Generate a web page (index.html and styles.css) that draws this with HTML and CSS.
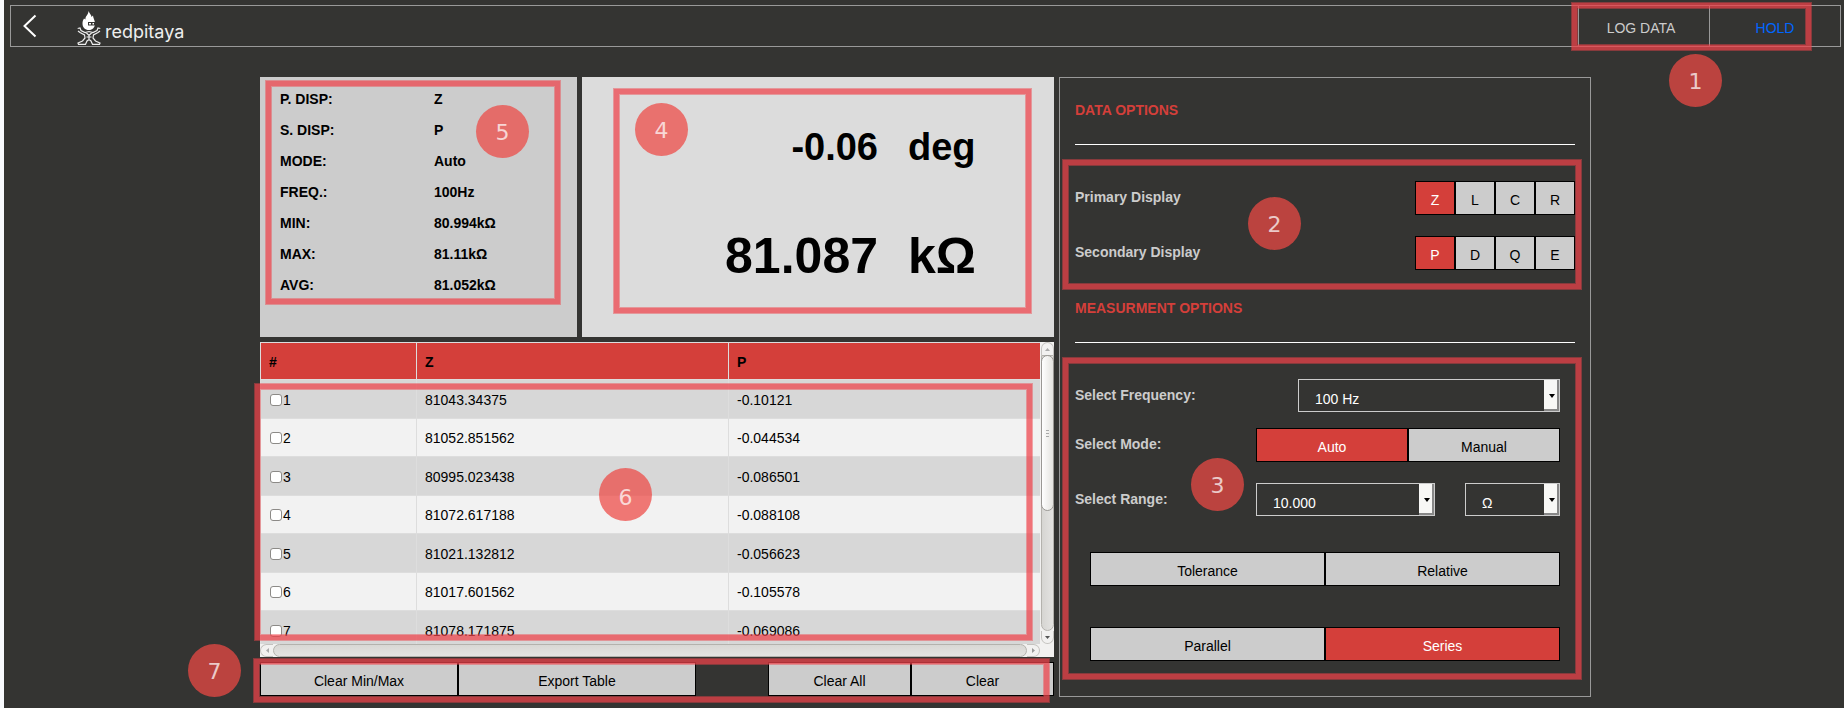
FILE: index.html
```html
<!DOCTYPE html>
<html lang="en">
<head>
<meta charset="utf-8">
<title>LCR meter</title>
<link rel="stylesheet" href="styles.css">
</head>
<body>
<header class="navbar">
  <a class="back" href="#" aria-label="Back">
    <svg width="14" height="24" viewBox="0 0 14 24"><path d="M12.500 1.500L1.500 12L12.500 22.500" fill="none" stroke="#fff" stroke-width="2"/></svg>
  </a>
  <a class="brand" href="#">
    <svg width="24" height="34" viewBox="0 0 24 34" aria-hidden="true">
      <path d="M11.500 0C12.500 2.500 14.500 4 14.500 6L16 4.500C16 7 18 9 18 12.500C18 16.500 15.500 19 12 19C8 19 5.500 16.500 5.500 12.500C5.500 10.500 6 9 7 7.500L8.500 8.500C8 5 11.500 4 11.500 0Z" fill="#fff"/>
      <path d="M11 11h7.500v3.500h-7.500z" fill="#343432"/>
      <path d="M12 12h2v1.500h-2zM15.500 12h1.500v1.500h-1.500z" fill="#fff"/>
      <path d="M0.700 17.500L3 17L4 19.500L8 21.500L12 20.500L16 21.500L20 19.500L21 17L23.300 17.500M1 20L3 21.500L7.500 24L8 27L5.500 30L1 32L1.500 33.300H8.500L10 30L12 28.500L14 30L15.500 33.300H22.500L23 32L18.500 30L16 27L16.500 24L21 21.500L23 20M9 21.500L12 24.500L15 21.500M12 24.500V28.500M9.500 26h5" fill="none" stroke="#eee" stroke-width="1.200"/>
    </svg>
    <span class="brand-name">redpitaya</span>
  </a>
  <nav class="actions">
    <button class="action action-log" type="button">LOG DATA</button>
    <button class="action action-hold" type="button">HOLD</button>
    <span class="mark mark-actions"></span>
    <span class="badge badge-actions">1</span>
  </nav>
</header>

<main class="layout">
  <div class="measure">
    <div class="readouts">
      <section class="info">
        <dl class="info-list">
          <dt>P. DISP:</dt><dd>Z</dd>
          <dt>S. DISP:</dt><dd>P</dd>
          <dt>MODE:</dt><dd>Auto</dd>
          <dt>FREQ.:</dt><dd>100Hz</dd>
          <dt>MIN:</dt><dd>80.994kΩ</dd>
          <dt>MAX:</dt><dd>81.11kΩ</dd>
          <dt>AVG:</dt><dd>81.052kΩ</dd>
        </dl>
        <span class="mark mark-info"></span>
        <span class="badge badge-info">5</span>
      </section>
      <section class="display">
        <div class="reading reading-secondary"><span class="value">-0.06</span><span class="unit">deg</span></div>
        <div class="reading reading-primary"><span class="value">81.087</span><span class="unit">kΩ</span></div>
        <span class="mark mark-display"></span>
        <span class="badge badge-display">4</span>
      </section>
    </div>

    <section class="log">
      <div class="log-view">
        <table class="log-table">
          <thead><tr><th class="col-id">#</th><th>Z</th><th>P</th></tr></thead>
          <tbody>
            <tr><td><label><input type="checkbox">1</label></td><td>81043.34375</td><td>-0.10121</td></tr>
            <tr><td><label><input type="checkbox">2</label></td><td>81052.851562</td><td>-0.044534</td></tr>
            <tr><td><label><input type="checkbox">3</label></td><td>80995.023438</td><td>-0.086501</td></tr>
            <tr><td><label><input type="checkbox">4</label></td><td>81072.617188</td><td>-0.088108</td></tr>
            <tr><td><label><input type="checkbox">5</label></td><td>81021.132812</td><td>-0.056623</td></tr>
            <tr><td><label><input type="checkbox">6</label></td><td>81017.601562</td><td>-0.105578</td></tr>
            <tr><td><label><input type="checkbox">7</label></td><td>81078.171875</td><td>-0.069086</td></tr>
          </tbody>
        </table>
      </div>
      <div class="bar bar-v">
        <span class="step"><svg width="5" height="3" viewBox="0 0 5 3"><path d="M0 3L2.500 0L5 3z" fill="#aaa"/></svg></span>
        <span class="track"><span class="thumb"><span class="grip"></span></span></span>
        <span class="step"><svg width="5" height="3" viewBox="0 0 5 3"><path d="M0 0L2.500 3L5 0z" fill="#555"/></svg></span>
      </div>
      <div class="bar bar-h">
        <span class="step"><svg width="3" height="5" viewBox="0 0 3 5"><path d="M3 0L0 2.500L3 5z" fill="#aaa"/></svg></span>
        <span class="track"></span>
        <span class="step"><svg width="3" height="5" viewBox="0 0 3 5"><path d="M0 0L3 2.500L0 5z" fill="#999"/></svg></span>
      </div>
      <span class="mark mark-log"></span>
      <span class="badge badge-log">6</span>
    </section>

    <div class="log-actions">
      <button class="btn" type="button">Clear Min/Max</button>
      <button class="btn" type="button">Export Table</button>
      <button class="btn btn-clear-all" type="button">Clear All</button>
      <button class="btn" type="button">Clear</button>
      <span class="mark mark-buttons"></span>
      <span class="badge badge-buttons">7</span>
    </div>
  </div>

  <aside class="options">
    <h2 class="heading">DATA OPTIONS</h2>
    <section class="group group-data">
      <div class="row row-display">
        <span class="label">Primary Display</span>
        <div class="toggles">
          <button class="btn active" type="button">Z</button><button class="btn" type="button">L</button><button class="btn" type="button">C</button><button class="btn" type="button">R</button>
        </div>
      </div>
      <div class="row row-display">
        <span class="label">Secondary Display</span>
        <div class="toggles">
          <button class="btn active" type="button">P</button><button class="btn" type="button">D</button><button class="btn" type="button">Q</button><button class="btn" type="button">E</button>
        </div>
      </div>
      <span class="mark mark-data"></span>
      <span class="badge badge-data">2</span>
    </section>

    <h2 class="heading heading-measure">MEASURMENT OPTIONS</h2>
    <section class="group group-measure">
      <div class="row row-frequency">
        <label class="label" for="frequency">Select Frequency:</label>
        <span class="picker"><select id="frequency"><option>100 Hz</option><option>1 kHz</option></select></span>
      </div>
      <div class="row row-mode">
        <span class="label">Select Mode:</span>
        <div class="pair"><button class="btn active" type="button">Auto</button><button class="btn" type="button">Manual</button></div>
      </div>
      <div class="row row-range">
        <label class="label" for="range">Select Range:</label>
        <span class="picker"><select id="range"><option>10.000</option></select></span>
        <span class="picker picker-unit"><select aria-label="Range unit"><option>Ω</option><option>kΩ</option></select></span>
      </div>
      <div class="pair pair-tolerance"><button class="btn" type="button">Tolerance</button><button class="btn" type="button">Relative</button></div>
      <div class="pair pair-circuit"><button class="btn" type="button">Parallel</button><button class="btn active" type="button">Series</button></div>
      <span class="mark mark-measure"></span>
      <span class="badge badge-measure">3</span>
    </section>
  </aside>
</main>
</body>
</html>
```

FILE: styles.css
```css
* { box-sizing: border-box; }

html { background: #343432; }

body {
  margin: 0;
  border-left: 4px solid #f8fafd;
  padding-top: 5px;
  min-height: 100vh;
  background: #343432;
  color: #000;
  font: 14px/20px "Liberation Sans", Arial, sans-serif;
}

button, select, input { font: inherit; margin: 0; border-radius: 0; }

/* Top bar */
.navbar {
  display: flex;
  height: 42px;
  margin: 0 3px 0 6px;
  border: 1px solid #999;
}
.back { display: flex; padding: 8px 0 0 12px; }
.brand { display: flex; padding: 5px 0 0 40px; gap: 4px; color: #eee; text-decoration: none; }
.brand-name { font: 400 18px/20px Inter, sans-serif; padding-top: 11px; }
.actions { position: relative; display: flex; margin-left: auto; }
.action {
  width: 131px;
  border: 0;
  border-left: 1px solid #999;
  padding: 4px 0 0;
  background: none;
  color: #ccc;
}
.action-log { padding-right: 6px; }
.action-hold { color: #06f; }

/* Columns */
.layout {
  display: grid;
  grid-template-columns: 256fr 794fr 5px 532fr 253fr;
  margin-top: 30px;
  padding-bottom: 11px;
  align-items: start;
}
.measure { grid-column: 2; display: grid; gap: 5px; min-width: 0; }
.options { grid-column: 4; padding: 22px 15px 35px; border: 1px solid #999; }

/* Read-outs */
.readouts { display: grid; grid-template-columns: 317fr 472fr; gap: 5px; min-height: 260px; }
.info { position: relative; background: #ccc; padding: 7px 20px; }
.info-list { display: grid; grid-template-columns: 154px 1fr; margin: 0; font-weight: bold; line-height: 31px; }
.info-list dd { margin: 0; }
.display { position: relative; background: #dcdcdc; padding: 46px 80px 0 30px; font-weight: bold; }
.reading { display: grid; grid-template-columns: 1fr 66px; column-gap: 30px; }
.reading .value { text-align: right; }
.reading-secondary { font-size: 38px; line-height: 48px; }
.reading-primary { font-size: 50px; line-height: 60px; margin-top: 55px; }

/* Log table */
.log { position: relative; display: grid; grid-template-columns: 1fr 14px; background: #f2f1f0; }
.log-view { height: 302px; overflow: hidden; }
.log-table { width: 100%; table-layout: fixed; border-collapse: separate; border-spacing: 0; background: #d7d7d7; }
.log-table th, .log-table td {
  height: 39px;
  border: solid #ddd;
  border-width: 1px 0 0 1px;
  padding: 2px 8px 0;
  text-align: left;
  vertical-align: middle;
}
.log-table th { height: 37px; background: #d43f3a; }
.log-table tr:nth-child(even) td { height: 38px; padding-top: 0; background: #f2f2f2; }
.col-id { width: 20%; }
.log-table label { display: flex; align-items: center; gap: 1px; }
.log-table input {
  appearance: none;
  width: 12px;
  height: 12px;
  margin-left: 1px;
  border: 1px solid #8c8a87;
  border-radius: 3px;
  background: #fff;
}

.bar { display: flex; background: #f2f1f0; }
.bar-v { flex-direction: column; margin-left: 1px; }
.bar-h { height: 13px; }
.bar .step { display: flex; align-items: center; justify-content: center; flex: 0 0 13px; border: 1px solid #c4c2bf; }
.bar-v .step:first-child { border-radius: 7px 7px 0 0; border-bottom: 0; }
.bar-v .step:last-child { border-radius: 0 0 7px 7px; border-top: 0; }
.bar-h .step:first-child { border-radius: 7px 0 0 7px; border-right: 0; }
.bar-h .step:last-child { border-radius: 0 7px 7px 0; border-left: 0; }
.track { flex: 1; border: 1px solid #b4b2ad; background: linear-gradient(90deg, #d6d5d2, #e4e3e1); }
.bar-v .track { border-radius: 0 0 7px 7px; }
.bar-h .track { border-radius: 7px; background: linear-gradient(#d8d7d4, #e4e3e1); }
.thumb {
  display: flex;
  align-items: center;
  justify-content: center;
  height: 57%;
  margin: -1px;
  border: 1px solid #9a9894;
  border-radius: 7px;
  background: linear-gradient(90deg, #fff, #e4e3df);
}
.grip { width: 3px; height: 7px; background: repeating-linear-gradient(#aaa 0 1px, transparent 1px 3px); }

/* Buttons */
.btn {
  min-width: 0;
  height: 34px;
  border: 1px solid #000;
  padding: 4px 0 0;
  background: #ccc;
  color: #000;
}
.btn.active { background: #d43f3a; color: #fff; }
.log-actions { position: relative; display: grid; grid-template-columns: 198fr 238fr 72fr 143fr 143fr; }
.btn-clear-all { grid-column: 4; }

/* Options panel */
.heading {
  margin: 0;
  padding-bottom: 24px;
  border-bottom: 1px solid #fff;
  color: #d43f3a;
  font-size: 14px;
  line-height: 20px;
}
.heading-measure { margin-top: 28px; }
.group { position: relative; padding-top: 36px; }
.row { display: grid; color: #ccc; }
.label { padding-top: 6px; font-weight: bold; }
.row-display { grid-template-columns: 1fr 160px; }
.row-display + .row-display { margin-top: 21px; }
.toggles { display: grid; grid-template-columns: repeat(4, 1fr); }
.pair { display: grid; grid-template-columns: 1fr 1fr; }
.group-measure { padding-right: 15px; }
.row-frequency { grid-template-columns: 223fr 262fr; }
.row-mode { grid-template-columns: 181fr 304fr; margin-top: 16px; }
.row-range { grid-template-columns: 181fr 179fr 30fr 95fr; margin-top: 21px; }
.picker-unit { grid-column: 4; }
.pair-tolerance { margin: 36px 0 0 15px; }
.pair-circuit { margin: 41px 0 0 15px; }

.picker { position: relative; display: block; height: 33px; }
.picker select {
  appearance: none;
  width: 100%;
  height: 33px;
  border: 1px solid #ccc;
  padding: 6px 16px 0 16px;
  background: #343432;
  color: #fff;
}
.picker::before {
  content: "";
  position: absolute;
  inset: 1px 1px 1px auto;
  width: 13px;
  border: solid #888;
  border-width: 0 2px 2px 0;
  background: #f8f8f6;
  pointer-events: none;
}
.picker::after {
  content: "";
  position: absolute;
  top: 15px;
  right: 5px;
  border: solid transparent;
  border-width: 4px 3px 0;
  border-top-color: #000;
  pointer-events: none;
}

/* Numbered call-outs */
.mark {
  position: absolute;
  border: 5px solid rgba(238, 66, 74, .73);
  box-shadow: 0 0 0 1px rgba(238, 66, 74, .45), inset 0 0 0 1px rgba(238, 66, 74, .45);
  pointer-events: none;
}
.badge {
  position: absolute;
  width: 53px;
  height: 53px;
  border-radius: 50%;
  background: rgba(237, 72, 68, .73);
  color: rgba(255, 255, 255, .73);
  font: 22px/56px "DejaVu Sans", sans-serif;
  text-align: center;
  pointer-events: none;
}
.mark-actions { inset: -3px 29px -4px -6px; }
.badge-actions { top: 48px; right: 118px; }
.mark-info { inset: 4px 17px 33px 6px; }
.badge-info { top: 28px; right: 48px; }
.mark-display { inset: 12px 23px 24px 32px; }
.badge-display { top: 26px; left: 53px; }
.mark-log { inset: 42px 22px 17px -5px; }
.badge-log { top: 126px; right: 402px; line-height: 60px; }
.mark-buttons { inset: -3px 5px -6px -6px; }
.badge-buttons { top: -18px; left: -72px; }
.mark-data { inset: 15px -6px -19px -12px; }
.badge-data { top: 52px; right: 274px; }
.mark-measure { inset: 15px -6px -18px -12px; }
.badge-measure { top: 115px; right: 331px; }
```
